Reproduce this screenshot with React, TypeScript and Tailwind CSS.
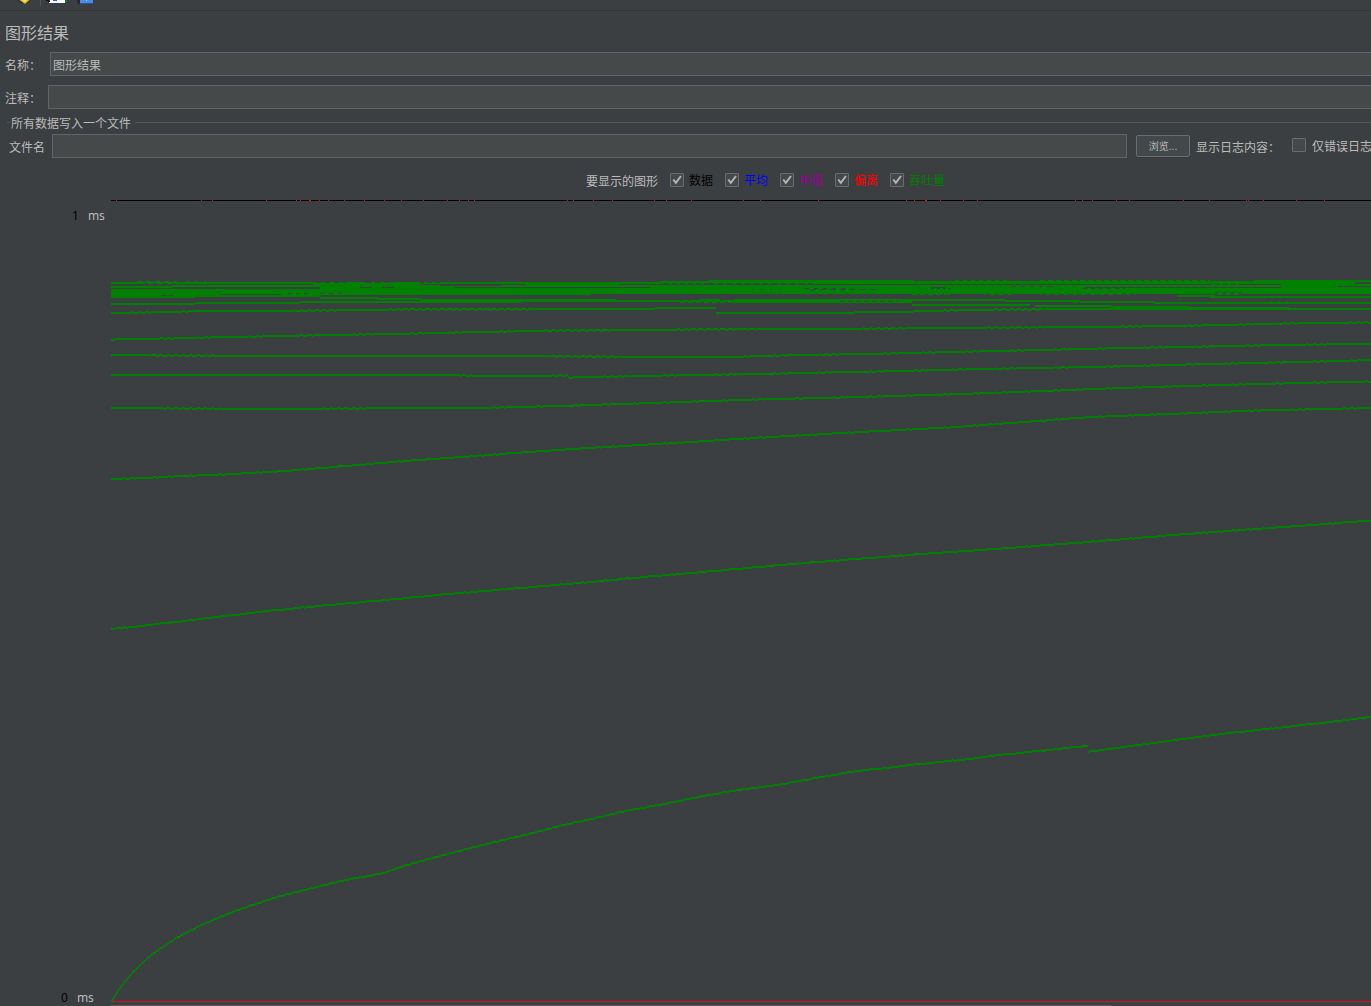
import React from 'react';

type Point = [number, number];
type Band = [number, number, number, number];

const GREEN = '#008000';
const LEFT = 110;
const TOP = 200;

/** Throughput curves as x/y samples; each is rasterised to whole pixels. */
const curves: Point[][] = [
  [[111, 312], [175, 311], [195, 310], [260, 310], [370, 309], [400, 308.4], [500, 308.4], [650, 308], [660, 307], [715, 307]],
  [[716, 312], [850, 312], [855, 311], [908, 311], [920, 310], [945, 309.6], [995, 308.6], [1040, 308.4], [1060, 308], [1371, 308]],
  [[111, 338.5], [130, 338], [170, 337.5], [200, 336.6], [250, 335.6], [300, 334.6], [355, 333.6], [412, 332.6], [450, 331.6], [500, 330.6], [545, 329.6], [665, 329], [690, 328.4], [810, 328.2], [940, 327], [1090, 326], [1170, 325], [1240, 323.6], [1290, 322.4], [1371, 321.4]],
  [[111, 354], [140, 354], [156, 354.5], [200, 354.6], [260, 355], [330, 354.8], [400, 355], [550, 355.3], [640, 355.8], [730, 356], [760, 355], [800, 354], [880, 352.7], [950, 351], [1040, 349], [1110, 347.3], [1180, 346], [1280, 344], [1371, 342.7]],
  [[111, 374], [450, 374], [480, 375], [520, 375], [567, 374.5], [568, 376.6], [580, 376], [630, 375.3], [690, 374], [750, 373.2], [800, 372], [900, 370], [980, 368], [1090, 366], [1210, 363], [1340, 360], [1371, 359]],
  [[111, 407], [150, 407.2], [200, 407.6], [280, 408], [350, 407.5], [400, 407], [480, 407], [520, 406], [560, 405], [590, 404], [620, 403], [700, 400.3], [760, 398.4], [860, 396], [960, 393], [1030, 390.5], [1120, 387], [1220, 384], [1310, 381.7], [1371, 380.5]],
  [[111, 478], [145, 477], [180, 475], [225, 473.4], [290, 469.6], [345, 465], [400, 460.4], [460, 456], [515, 452], [570, 448], [620, 445.2], [690, 441], [770, 436], [860, 431], [950, 426.4], [1010, 422], [1090, 416], [1170, 413], [1250, 409.6], [1371, 407]],
  [[111, 628], [140, 625], [200, 618], [270, 609.6], [340, 603], [390, 598.6], [450, 592.8], [520, 587], [590, 581], [655, 575], [725, 569], [780, 564], [860, 557.6], [930, 552.4], [1000, 547.6], [1100, 540], [1190, 532.6], [1270, 527], [1371, 519.5]],
  [[111, 1000], [120, 986], [133, 970.5], [150, 954.5], [173, 938.6], [200, 924.4], [220, 916], [237, 909], [255, 903], [278, 895.6], [320, 885], [350, 878], [382, 872.4], [400, 866], [430, 857.5], [490, 842], [530, 832.6], [565, 823.6], [600, 816], [620, 811], [660, 803.6], [705, 794.6], [740, 788.6], [780, 783.4], [810, 778], [850, 771], [880, 767.5], [920, 763], [970, 757.8], [1000, 754], [1087, 744.8]],
  [[1088, 750.6], [1100, 749], [1120, 746.4], [1167, 740], [1233, 731.6], [1300, 724.4], [1371, 716]],
];

/** Saturated region near the ceiling: x start, x end, first row, row count. */
const bands: Band[] = [
  [111, 500, 282, 2], [111, 172, 286, 2], [172, 440, 285, 2], [320, 500, 286, 2],
  [314, 420, 284, 2], [111, 195, 289, 9], [195, 320, 289, 8], [320, 500, 287, 8],
  [320, 378, 297, 2], [378, 422, 298, 2], [111, 195, 303, 2], [195, 300, 302, 2],
  [300, 420, 301, 2], [420, 521, 299, 4], [500, 709, 282, 2], [525, 620, 284, 1],
  [500, 650, 285, 2], [650, 800, 285, 4], [500, 590, 288, 7], [590, 931, 288, 6],
  [660, 709, 281, 2], [709, 913, 280, 4], [913, 1200, 281, 3], [800, 931, 285, 3],
  [521, 616, 299, 3], [616, 735, 300, 2], [700, 720, 299, 2], [733, 912, 299, 4],
  [912, 1005, 299, 2], [912, 1030, 304, 2], [931, 1090, 285, 2], [945, 1085, 287, 1],
  [931, 1371, 288, 6], [1085, 1281, 285, 2], [1200, 1300, 281, 3], [1281, 1338, 281, 7],
  [1255, 1371, 280, 2], [1338, 1355, 282, 4], [1338, 1371, 284, 2], [1338, 1371, 287, 1],
  [1177, 1215, 295, 2], [1210, 1371, 296, 2], [1005, 1080, 300, 2], [1080, 1154, 301, 2],
  [1154, 1371, 302, 2], [1035, 1111, 305, 2], [1111, 1188, 306, 4], [1188, 1290, 307, 3],
];

/** One-pixel notches: x start, x end, row, spacing, length, drawn or cleared. */
const notches: [number, number, number, number, number, boolean][] = [
  [137, 177, 281, 9, 5, true], [186, 212, 281, 9, 3, true], [145, 177, 283, 9, 3, false],
  [161, 173, 295, 8, 6, false], [220, 282, 294, 62, 62, false],
  [288, 312, 293, 8, 3, false], [320, 345, 293, 9, 4, false], [360, 400, 287, 22, 12, false],
  [455, 500, 287, 46, 45, false], [500, 650, 287, 151, 150, false],
  [316, 346, 282, 9, 5, false], [366, 392, 282, 9, 5, false], [420, 440, 282, 8, 4, false],
  [664, 709, 283, 8, 4, false], [709, 812, 283, 9, 5, false], [752, 780, 289, 9, 2, false],
  [805, 850, 288, 9, 4, false], [810, 876, 289, 10, 6, false], [680, 735, 302, 8, 5, true],
  [840, 898, 301, 8, 4, false], [912, 950, 294, 8, 5, true], [955, 1010, 280, 8, 4, true],
  [1040, 1210, 280, 8, 5, true], [931, 950, 288, 6, 3, false], [990, 1012, 294, 9, 5, true],
  [1046, 1130, 294, 9, 4, true], [1083, 1125, 288, 8, 4, false], [1012, 1055, 286, 9, 4, false],
  [1212, 1242, 284, 8, 3, true], [1215, 1242, 292, 8, 4, false], [1218, 1240, 294, 8, 4, true],
  [1073, 1095, 302, 9, 4, true], [1270, 1290, 301, 8, 2, true],
];

const redMarks = [
  116, 201, 212, 266, 296, 300, 309, 310, 319, 328, 344, 364, 384, 401, 423, 447, 459, 468, 474,
  567, 573, 593, 612, 654, 666, 691, 743, 760, 818, 906, 914, 925, 926, 940, 963, 977, 1075,
  1082, 1092, 1116, 1129, 1183, 1209, 1246, 1248, 1263, 1296, 1324,
];

function block(x: number, y: number, w: number, h: number) {
  return `M${x - LEFT} ${y - TOP}h${w}v${h}h${-w}z`;
}

function rasterise(points: Point[]) {
  let d = '';
  let runStart = points[0][0];
  let runY = Math.round(points[0][1]);
  let seg = 0;
  const end = points[points.length - 1][0];
  for (let x = runStart; x <= end; x++) {
    while (seg < points.length - 2 && x > points[seg + 1][0]) seg++;
    const [x0, y0] = points[seg];
    const [x1, y1] = points[seg + 1];
    const exact = y0 + ((y1 - y0) * (x - x0)) / (x1 - x0);
    const y = Math.round(exact + 0.22 * Math.sin(x * 0.85));
    if (y !== runY) {
      d += block(runStart, runY, x - runStart, 2);
      if (Math.abs(y - runY) > 1 && x < 150) d += block(x, y, 1, Math.abs(y - runY) + 1);
      runStart = x;
      runY = y;
    }
  }
  return d + block(runStart, runY, end - runStart + 1, 2);
}

function notchPath(drawn: boolean) {
  let d = '';
  for (const [a, b, y, step, len, on] of notches) {
    if (on !== drawn) continue;
    for (let x = a; x < b; x += step) d += block(x, y, Math.min(len, b - x), 1);
  }
  return d;
}

function Chart() {
  return (
    <svg className="block shrink-0" width="1261" height="806" viewBox="0 0 1261 806" shapeRendering="crispEdges">
      <path d={block(111, 200, 1260, 1)} fill="#000" />
      <path d={redMarks.map((x) => block(x, 200, 1, 1)).join('')} fill="#f00" />
      <path d={block(111, 1001, 1260, 1)} fill="#e01010" />
      <path d={block(110, 1005, 1001, 1)} fill="#55585a" />
      <path d={bands.map(([a, b, y, h]) => block(a, y, b - a, h)).join('')} fill={GREEN} />
      <path d={notchPath(true)} fill={GREEN} />
      <path d={notchPath(false)} fill="#3c3f41" />
      <path d={curves.map(rasterise).join('')} fill={GREEN} />
    </svg>
  );
}

function Checkbox({ checked = false }: { checked?: boolean }) {
  return (
    <span className="block h-[14px] w-[14px] shrink-0 rounded-[1px] border border-[#6b6b6b] bg-[#43494a]">
      {checked && (
        <svg width="12" height="12" viewBox="0 0 12 12" fill="none" stroke="#b4b4b4" strokeWidth="2">
          <path d="M2.300 5.500 4.800 8.800 10 2" />
        </svg>
      )}
    </span>
  );
}

function ToolbarIcons() {
  return (
    <svg className="block" width="110" height="10" viewBox="0 0 110 10">
      <path d="M17 0h14l-4 3.5h-6z" fill="#303335" />
      <path d="M19.500 0h10L25 4z" fill="#d9bd23" />
      <path d="M22 0h5l-2 2z" fill="#f5e67a" />
      <path d="M40 0h1v6h-1z" fill="#555" />
      <path d="M46 0h3v1h-3zM48 1h2v1h-2z" fill="#111" />
      <path d="M50 0h15v3H49V2h1z" fill="#fff" />
      <path d="M53 0h4v1h-4z" fill="#2368df" />
      <path d="M65 0h2v2h-2z" fill="#0b7d12" />
      <path d="M77 0h3v4h-2l-1-2z" fill="#22282d" />
      <path d="M80 0h13v3H80z" fill="#4d8ce0" />
      <path d="M80 3h13v1H80z" fill="#24569c" />
      <path d="M86 0h1v1h-1z" fill="#a8cbfa" />
    </svg>
  );
}

const legend = [
  { label: '数据', color: 'text-black' },
  { label: '平均', color: 'text-[#0000ff]' },
  { label: '中值', color: 'text-[#990099]' },
  { label: '偏离', color: 'text-[#ff0000]' },
  { label: '吞吐量', color: 'text-[#008000]' },
];

export default function App() {
  return (
    <div className="flex h-[1006px] w-[1371px] flex-col overflow-hidden whitespace-nowrap bg-[#3c3f41] font-['Liberation_Sans','Noto_Sans_CJK_SC',sans-serif] text-[12px] leading-[14px] text-[#bbbbbb]">
      <div className="h-[11px] shrink-0 border-b border-[#323537]">
        <ToolbarIcons />
      </div>
      <h1 className="mt-[13px] h-[20px] shrink-0 pl-[5px] text-[16px] font-normal leading-[20px]">图形结果</h1>
      <div className="mt-[8px] flex h-6 shrink-0 items-center pl-[5px]">
        <span className="w-[45px] pt-[4px]">名称：</span>
        <div className="flex h-6 flex-1 items-center border border-r-0 border-[#646464] bg-[#45494a] pl-[2px] pt-[4px]">图形结果</div>
      </div>
      <div className="mt-[9px] flex h-6 shrink-0 items-center pl-[5px]">
        <span className="w-[43px] pt-[4px]">注释：</span>
        <div className="h-6 flex-1 border border-r-0 border-[#646464] bg-[#45494a]" />
      </div>
      <div className="mt-[7px] flex h-[13px] shrink-0 items-center pl-[7px]">
        <span className="h-px w-[3px] bg-[#555555]" />
        <span className="ml-px mr-[2px] w-[122px] pt-[3px]">所有数据写入一个文件</span>
        <span className="h-px flex-1 bg-[#555555]" />
      </div>
      <div className="mt-[5px] flex h-6 shrink-0 items-center pl-[9px]">
        <span className="w-[43px] shrink-0 pt-[4px]">文件名</span>
        <div className="h-6 w-[1075px] shrink-0 border border-[#646464] bg-[#45494a]" />
        <button className="ml-[9px] flex h-[22px] w-[54px] shrink-0 items-center justify-center rounded-[2px] border border-[#6b6e70] bg-[#43494a] pt-[2px] text-[10px] leading-none text-[#bbbbbb] shadow-[0_1px_0_#35383a]">浏览...</button>
        <span className="ml-[6px] w-[96px] shrink-0 pt-[4px]">显示日志内容：</span>
        <div className="pb-[2px]"><Checkbox /></div>
        <span className="ml-[6px] pt-[2px]">仅错误日志</span>
      </div>
      <div className="mt-[15px] flex h-[14px] shrink-0 items-center pl-[586px]">
        <span className="w-[84px] pt-[4px]">要显示的图形</span>
        {legend.map(({ label, color }) => (
          <div key={label} className="flex h-[14px] w-[55px] shrink-0 items-center">
            <Checkbox checked />
            <span className={`ml-[5px] pt-[2px] ${color}`}>{label}</span>
          </div>
        ))}
      </div>
      <div className="mt-[13px] flex h-[806px] shrink-0">
        <div className="flex w-[110px] shrink-0 flex-col justify-between pb-px pt-[9px] font-['Noto_Sans',sans-serif] text-[12px]">
          <div className="flex gap-[9px] pl-[72px]"><span className="text-black">1</span><span>ms</span></div>
          <div className="flex gap-[9px] pl-[61px]"><span className="text-black">0</span><span>ms</span></div>
        </div>
        <Chart />
      </div>
    </div>
  );
}
